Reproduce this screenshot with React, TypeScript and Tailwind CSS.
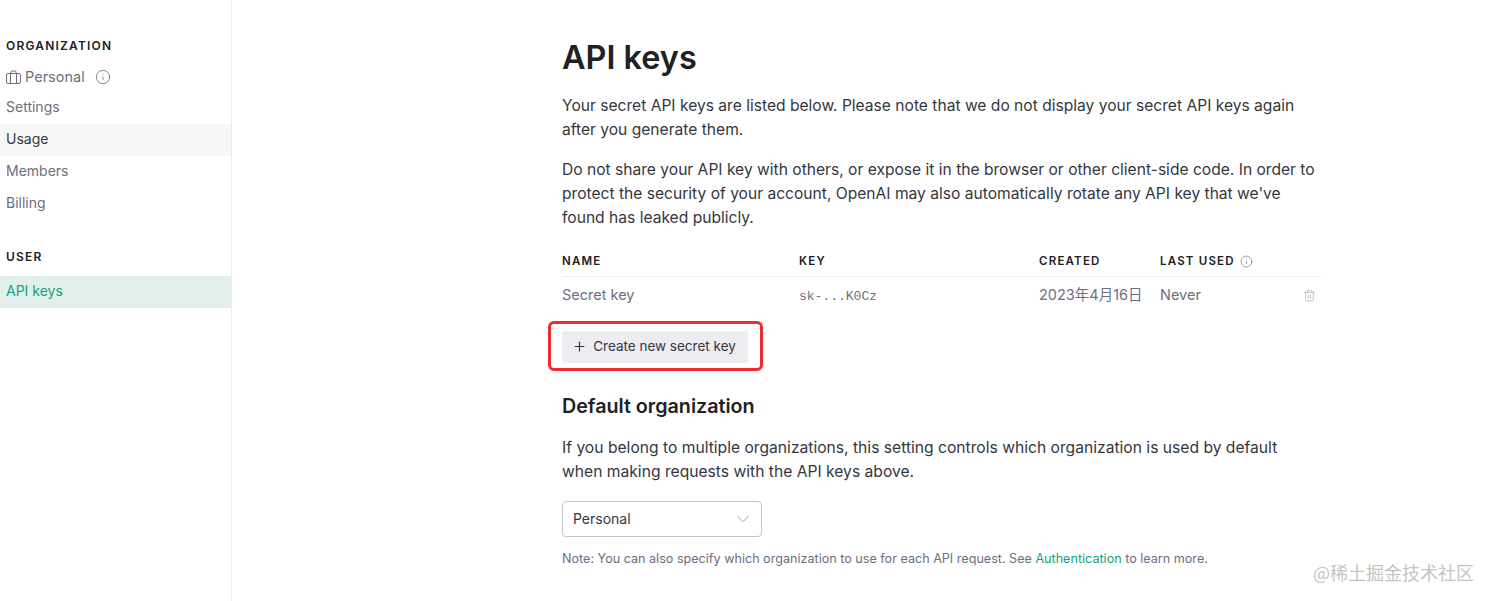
import React from "react";
import { ChevronDown, Info, Plus, Trash2 } from "lucide-react";

const font = "font-['Inter','Noto_Sans_CJK_SC',sans-serif]";

function NavItem({ label, active, hover }: { label: string; active?: boolean; hover?: boolean }) {
  let cls = "text-[#6e6e80]";
  if (active) cls = "bg-[#e1f0ec] text-[#10a37f]";
  if (hover) cls = "bg-[#f7f7f8] text-[#353740]";
  return <div className={`h-8 flex items-center pb-1 pl-1.5 text-[14px] ${cls}`}>{label}</div>;
}

function SectionLabel({ children }: { children: React.ReactNode }) {
  return <div className="pl-1.5 text-[12px] leading-4 font-semibold tracking-[1.2px] text-[#202123]">{children}</div>;
}

function Th({ className, children }: { className: string; children: React.ReactNode }) {
  return <div className={`text-[11.5px] font-semibold tracking-[1.2px] text-[#202123] ${className}`}>{children}</div>;
}

function CaseIcon() {
  return (
    <svg width="15" height="15" viewBox="0 0 15 15" fill="none" stroke="currentColor" strokeWidth="1">
      <rect x="0.5" y="3.5" width="14" height="10" rx="1.5" />
      <path d="M4.5 13.5v-10M10.5 13.5v-10M5 3.5V2a1 1 0 0 1 1-1h3a1 1 0 0 1 1 1v1.5" />
    </svg>
  );
}

export default function App() {
  return (
    <div className={`${font} relative flex h-[601px] w-[1492px] overflow-hidden bg-white`}>
      {/* Sidebar */}
      <aside className="w-[232px] shrink-0 border-r border-[#ececf1] pt-[38px]">
        <SectionLabel>ORGANIZATION</SectionLabel>
        <div className="mt-[13px] flex h-5 items-center pl-1.5 text-[14.5px] text-[#6e6e80]">
          <CaseIcon />
          <span className="ml-1">Personal</span>
          <Info size={16} strokeWidth={1.25} className="ml-2.5" />
        </div>
        <div className="mt-[5px]">
          <NavItem label="Settings" />
          <NavItem label="Usage" hover />
          <NavItem label="Members" />
          <NavItem label="Billing" />
        </div>
        <div className="mt-[29px]">
          <SectionLabel>USER</SectionLabel>
        </div>
        <div className="mt-[11px]">
          <NavItem label="API keys" active />
        </div>
      </aside>

      {/* Main */}
      <main className="ml-[330px] w-[759px] pt-[39px] text-[#353740]">
        <h1 className="text-[32.4px] leading-[38px] font-semibold text-[#202123]">API keys</h1>
        <p className="mt-[17px] text-[15.6px] leading-6">
          Your secret API keys are listed below. Please note that we do not display your secret API keys again
          <br />
          after you generate them.
        </p>
        <p className="mt-4 text-[15.6px] leading-6">
          Do not share your API key with others, or expose it in the browser or other client-side code. In order to
          <br />
          protect the security of your account, OpenAI may also automatically rotate any API key that we've
          <br />
          found has leaked publicly.
        </p>

        {/* Table */}
        <div className="mt-[17px] flex h-[30px] items-center border-b border-[#ececf1]">
          <Th className="w-[237px]">NAME</Th>
          <Th className="w-[240px]">KEY</Th>
          <Th className="w-[121px]">CREATED</Th>
          <Th className="flex items-center">
            LAST USED
            <Info size={13} strokeWidth={1.25} className="ml-[5px] text-[#6e6e80]" />
          </Th>
        </div>
        <div className="flex h-[36px] items-center text-[14.5px] text-[#6e6e80]">
          <div className="w-[237px]">Secret key</div>
          <div className="w-[240px] pt-[4px] font-['Liberation_Mono',monospace] text-[13px]">sk-...K0Cz</div>
          <div className="w-[121px] whitespace-nowrap">2023年4月16日</div>
          <div className="w-[143px]">Never</div>
          <Trash2 size={13} strokeWidth={1} className="text-[#8e8ea0]" />
        </div>

        {/* Button with red highlight */}
        <div className="relative mt-[18px] w-fit">
          <button className="flex h-8 w-[186px] items-center justify-center gap-[6px] rounded-[3px] bg-[#ececf1] pb-[2px] pr-[2px] text-[13.5px] text-[#353740]">
            <Plus size={15} strokeWidth={1.75} />
            Create new secret key
          </button>
          <div className="absolute -top-[10px] -bottom-[8px] -left-[14px] -right-[15px] rounded-[6px] border-[3px] border-[#ee2c2c]" />
        </div>

        <h2 className="mt-[29px] text-[19.7px] leading-7 font-semibold text-[#202123]">Default organization</h2>
        <p className="mt-4 text-[15.65px] leading-6">
          If you belong to multiple organizations, this setting controls which organization is used by default
          <br />
          when making requests with the API keys above.
        </p>
        <div className="mt-[17px] flex h-9 w-[200px] items-center justify-between rounded-[4px] border border-[#c5c5d2] pb-[2px] pl-2.5 pr-[7px] text-[14px]">
          Personal
          <ChevronDown size={22} strokeWidth={0.9} className="mt-[2px] text-[#8e8ea0]" />
        </div>
        <p className="mt-[14px] whitespace-nowrap text-[12.6px] leading-4 text-[#6e6e80]">
          Note: You can also specify which organization to use for each API request. See{" "}
          <span className="text-[#10a37f]">Authentication</span> to learn more.
        </p>
      </main>

      {/* Watermark */}
      <div className="absolute left-[1313px] top-[560px] font-['Noto_Sans_CJK_SC',sans-serif] text-[18px] leading-6 whitespace-nowrap text-[#c4c4c4]">
        @稀土掘金技术社区
      </div>
    </div>
  );
}
